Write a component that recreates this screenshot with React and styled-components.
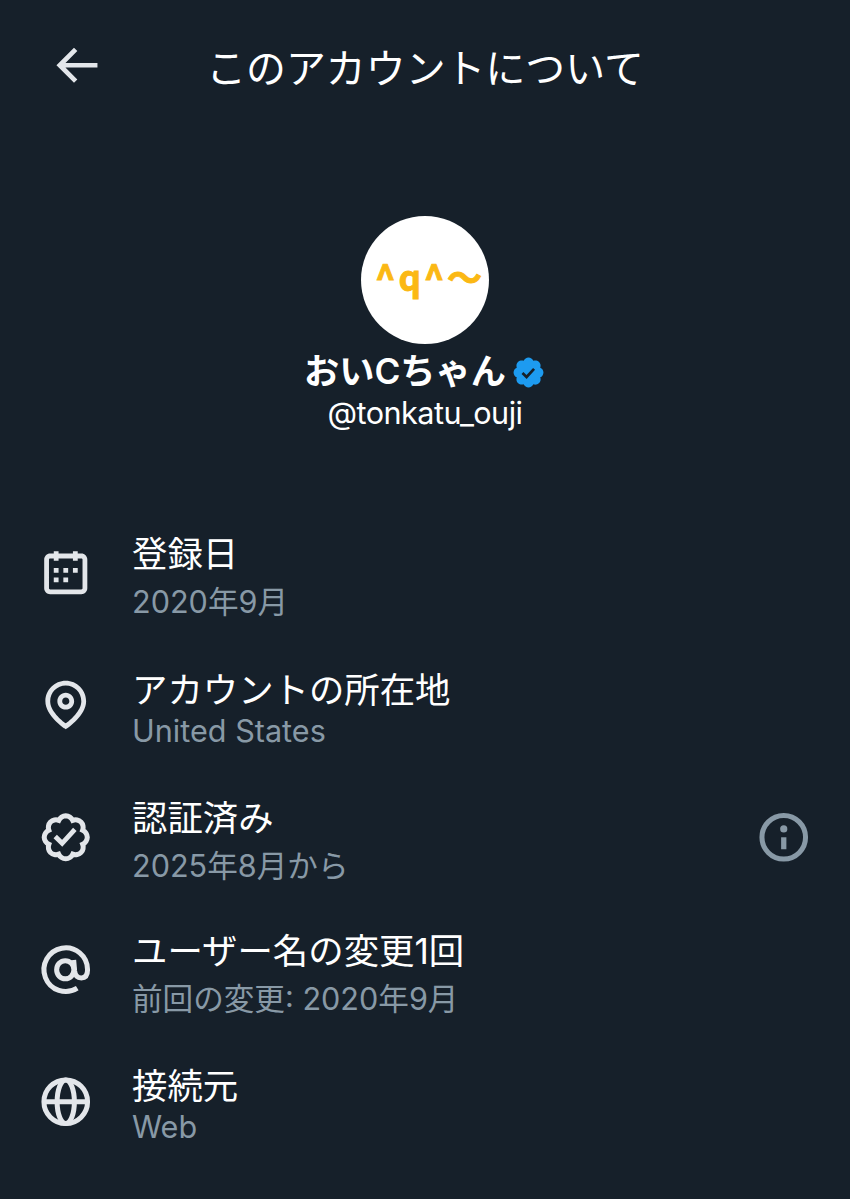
import React from 'react';
import styled, { createGlobalStyle } from 'styled-components';

const GlobalStyle = createGlobalStyle`
  * {
    box-sizing: border-box;
  }

  body {
    margin: 0;
    background: #16202a;
    color: #fff;
    font-family: Inter, "Noto Sans CJK JP", sans-serif;
  }
`;

const Page = styled.main`
  width: 850px;
  height: 1199px;
  overflow: hidden;
  background: #16202a;
`;

const Header = styled.header`
  display: grid;
  grid-template-columns: 152px 1fr 152px;
  align-items: center;
  height: 131px;
`;

const BackButton = styled.button`
  display: flex;
  padding: 0 0 0 47.5px;
  border: 0;
  background: none;
  color: #e3e6ea;
`;

const Title = styled.h1`
  margin: 6px 0 0;
  font-size: 39.9px;
  font-weight: 400;
  line-height: 58px;
  text-align: center;
  white-space: nowrap;
`;

const Profile = styled.section`
  display: flex;
  flex-direction: column;
  align-items: center;
  height: 375.6px;
  padding-top: 85px;
`;

const Avatar = styled.div`
  display: flex;
  align-items: center;
  justify-content: center;
  width: 128px;
  height: 128px;
  border-radius: 50%;
  background: #fff;
`;

const NameRow = styled.div`
  display: flex;
  align-items: center;
  gap: 5px;
  height: 56px;
`;

const Name = styled.h2`
  margin: -2px 0 0;
  font-size: 35.2px;
  font-weight: 600;
  line-height: 56px;
`;

const Handle = styled.p`
  margin: -1px 0 0;
  font-size: 30.6px;
  letter-spacing: -0.55px;
  line-height: 28px;
`;

const List = styled.ul`
  margin: 0;
  padding: 0;
  list-style: none;
`;

const Item = styled.li`
  display: grid;
  grid-template-columns: 57.5px 1fr 57.5px;
  column-gap: 33px;
  align-items: center;
  height: 132.3px;
  padding: 0 37.5px 0 37px;
  color: #e3e6ea;
`;

const Texts = styled.div`
  padding: 11px 0 0 4.5px;
`;

const Label = styled.div`
  color: #fff;
  font-size: 35.4px;
  line-height: 48px;
`;

const Value = styled.div`
  margin-top: ${(p) => (p.$latin ? '-8px' : '-1px')};
  color: #8899a6;
  font-size: 30.6px;
  line-height: 48px;
`;

const InfoButton = styled.button`
  display: flex;
  padding: 0;
  border: 0;
  background: none;
  color: #8899a6;
`;

const Icon = ({ size = 57.5, children }) => (
  <svg width={size} height={size} viewBox="0 0 24 24" fill="currentColor">
    {children}
  </svg>
);

const badgePath =
  'M20.396 11c-.018-.646-.215-1.275-.57-1.816-.354-.54-.852-.972-1.438-1.246.223-.607.27-1.264.14-1.897-.131-.634-.437-1.218-.882-1.687-.47-.445-1.053-.75-1.687-.882-.633-.13-1.29-.083-1.897.14-.273-.587-.704-1.086-1.245-1.44S11.647 1.62 11 1.604c-.646.017-1.273.213-1.813.568s-.969.854-1.24 1.44c-.608-.223-1.267-.272-1.902-.14-.635.13-1.22.436-1.69.882-.445.47-.749 1.055-.878 1.688-.13.633-.08 1.29.144 1.896-.587.274-1.087.705-1.443 1.245-.356.54-.555 1.17-.574 1.817.02.647.218 1.276.574 1.817.356.54.856.972 1.443 1.245-.224.606-.274 1.263-.144 1.896.13.634.433 1.218.877 1.688.47.443 1.054.747 1.687.878.633.132 1.29.084 1.897-.136.274.586.705 1.084 1.246 1.439.54.354 1.17.551 1.816.569.647-.016 1.276-.213 1.817-.567s.972-.854 1.245-1.44c.604.239 1.266.296 1.903.164.636-.132 1.22-.447 1.68-.907.46-.46.776-1.044.908-1.681s.075-1.299-.165-1.903c.586-.274 1.084-.705 1.439-1.246.354-.54.551-1.17.569-1.816z';

const BackIcon = () => (
  <Icon size={56.5}>
    <path d="M7.414 13l5.043 5.04-1.414 1.42L3.586 12l7.457-7.46 1.414 1.42L7.414 11H21v2H7.414z" />
  </Icon>
);

const CalendarIcon = () => (
  <Icon>
    <path d="M7 4V3h2v1h6V3h2v1h1.5C19.89 4 21 5.12 21 6.5v12c0 1.38-1.11 2.5-2.5 2.5h-13C4.12 21 3 19.88 3 18.5v-12C3 5.12 4.12 4 5.5 4H7zm0 2H5.5c-.27 0-.5.22-.5.5v12c0 .28.23.5.5.5h13c.28 0 .5-.22.5-.5v-12c0-.28-.22-.5-.5-.5H17v1h-2V6H9v1H7V6zm0 6h2v-2H7v2zm0 4h2v-2H7v2zm4-4h2v-2h-2v2zm0 4h2v-2h-2v2zm4-4h2v-2h-2v2z" />
  </Icon>
);

const PinIcon = () => (
  <Icon>
    <path d="M12 7c-1.93 0-3.5 1.57-3.5 3.5S10.07 14 12 14s3.5-1.57 3.5-3.5S13.93 7 12 7zm0 5c-.827 0-1.5-.673-1.5-1.5S11.173 9 12 9s1.5.673 1.5 1.5S12.827 12 12 12zm0-10c-4.687 0-8.5 3.813-8.5 8.5 0 5.967 7.621 11.116 7.945 11.332l.555.37.555-.37c.324-.216 7.945-5.365 7.945-11.332C20.5 5.813 16.687 2 12 2zm0 17.77c-1.665-1.241-6.5-5.196-6.5-9.27C5.5 6.916 8.416 4 12 4s6.5 2.916 6.5 6.5c0 4.073-4.835 8.028-6.5 9.27z" />
  </Icon>
);

const VerifiedIcon = () => (
  <Icon>
    <g fill="none" stroke="currentColor">
      <path d={badgePath} strokeWidth="2.2" transform="translate(1.47 1.27) scale(.957)" />
      <path d="M7.6 11.5l2.9 2.8 5.3-5.8" strokeWidth="2" />
    </g>
  </Icon>
);

const AtIcon = () => (
  <Icon>
    <g fill="none" stroke="currentColor" strokeWidth="2.1">
      <path d="M16.8 19.7A9.1 9.1 0 1 1 21.1 12c0 2.2-.9 3.4-2.6 3.4-1.7 0-2.6-1.2-2.8-2.9l-.4-4.6" />
      <ellipse cx="11.8" cy="12" rx="3.6" ry="3.8" />
    </g>
  </Icon>
);

const GlobeIcon = () => (
  <Icon>
    <g fill="none" stroke="currentColor" strokeWidth="2.1">
      <circle cx="12" cy="12" r="9.1" />
      <ellipse cx="12" cy="12" rx="3.6" ry="9.1" />
      <path d="M3 12h18" />
    </g>
  </Icon>
);

const InfoIcon = () => (
  <Icon>
    <circle cx="12" cy="11.8" r="9.1" fill="none" stroke="currentColor" strokeWidth="2.1" />
    <circle cx="12" cy="8.3" r="1.5" />
    <path d="M10.9 11.8h2.2v5h-2.2z" />
  </Icon>
);

const BlueBadge = () => (
  <svg width="35" height="35" viewBox="0 0 22 22">
    <path d={badgePath} fill="#1d9bf0" />
    <path d="M7.2 11.3l2.6 2.5 4.7-5.1" fill="none" stroke="#16202a" strokeWidth="1.7" />
  </svg>
);

const Face = styled.svg`
  fill: #fbb814;
  stroke: #fbb814;
  stroke-width: 0.9px;
  font-family: "Noto Sans CJK JP", sans-serif;
  font-size: 35px;
  font-weight: 700;
  text-anchor: middle;
`;

const AvatarFace = () => (
  <Face width="128" height="128" viewBox="0 0 128 128">
    <text x="24.4" y="75">^</text>
    <text x="48.7" y="75">q</text>
    <text x="73.2" y="75">^</text>
    <text x="103.5" y="75">〜</text>
  </Face>
);

const rows = [
  { icon: CalendarIcon, label: '登録日', value: '2020年9月' },
  { icon: PinIcon, label: 'アカウントの所在地', value: 'United States', latin: true },
  { icon: VerifiedIcon, label: '認証済み', value: '2025年8月から', info: true },
  { icon: AtIcon, label: 'ユーザー名の変更1回', value: '前回の変更: 2020年9月' },
  { icon: GlobeIcon, label: '接続元', value: 'Web', latin: true },
];

const App = () => {
  return (
    <Page lang="ja">
      <GlobalStyle />
      <Header>
        <BackButton>
          <BackIcon />
        </BackButton>
        <Title>このアカウントについて</Title>
      </Header>
      <Profile>
        <Avatar>
          <AvatarFace />
        </Avatar>
        <NameRow>
          <Name>おいCちゃん</Name>
          <BlueBadge />
        </NameRow>
        <Handle>@tonkatu_ouji</Handle>
      </Profile>
      <List>
        {rows.map(({ icon: RowIcon, label, value, latin, info }) => (
          <Item key={label}>
            <RowIcon />
            <Texts>
              <Label>{label}</Label>
              <Value $latin={latin}>{value}</Value>
            </Texts>
            {info && (
              <InfoButton>
                <InfoIcon />
              </InfoButton>
            )}
          </Item>
        ))}
      </List>
    </Page>
  );
};

export default App;
